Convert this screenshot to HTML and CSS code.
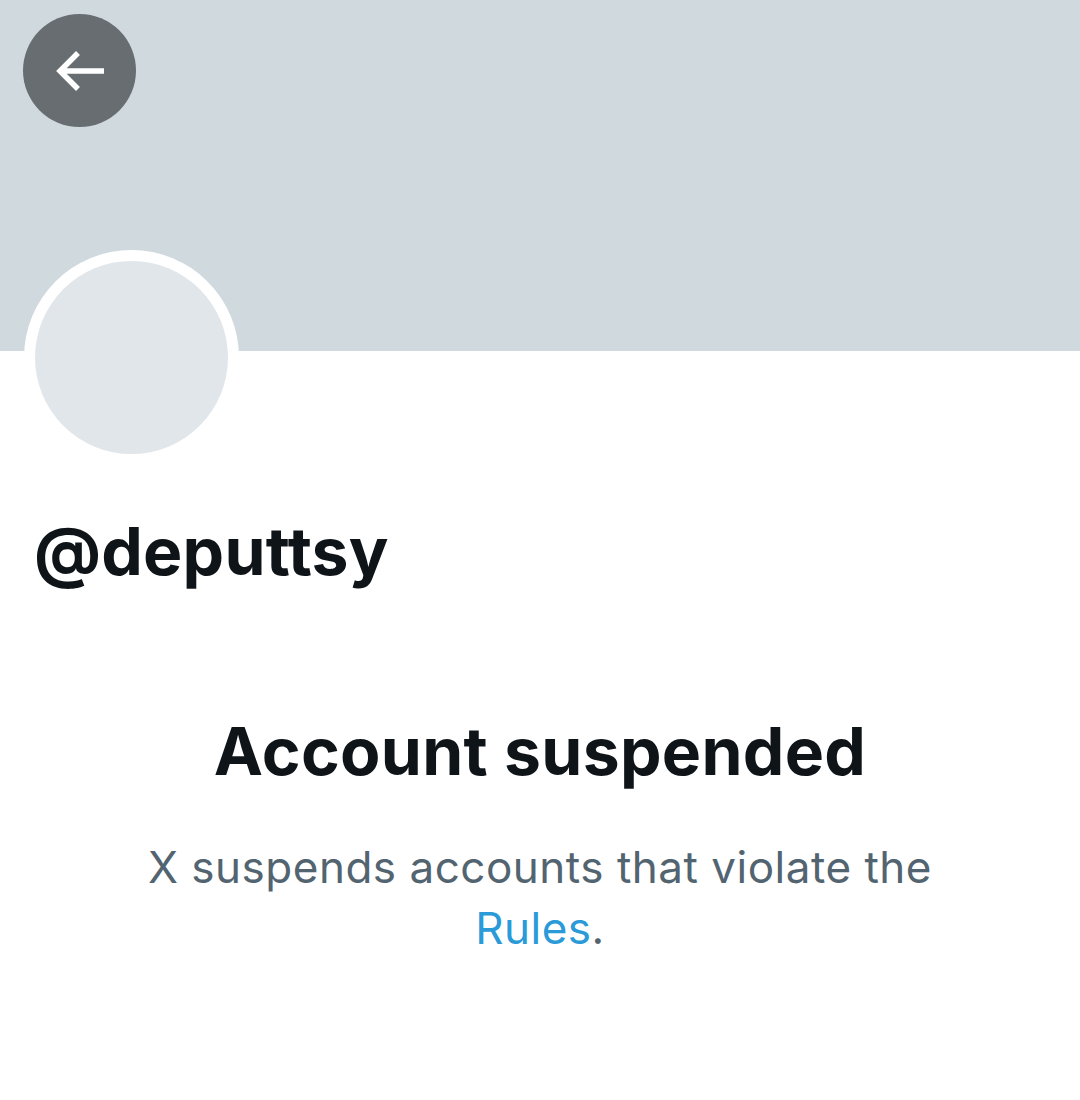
FILE: index.html
```html
<!DOCTYPE html>
<html>
<head>
<meta charset="utf-8">
<link rel="stylesheet" href="styles.css">
</head>
<body>
<div class="page">
  <div class="banner">
    <button class="back" aria-label="Back">
      <svg width="50" height="42" viewBox="0 0 50 42"><path d="M24 3 L6 21 L24 39 M6 21 H50" fill="none" stroke="#fff" stroke-width="5.5" stroke-linecap="butt"/></svg>
    </button>
  </div>
  <div class="profile">
    <div class="avatar-ring"><div class="avatar"></div></div>
    <div class="handle">@deputtsy</div>
  </div>
  <div class="notice">
    <h1 class="title">Account suspended</h1>
    <p class="desc">X suspends accounts that violate the <a class="link" href="#">Rules</a>.</p>
  </div>
</div>
</body>
</html>
```
FILE: styles.css
```css
* { box-sizing: border-box; }
html, body { margin: 0; padding: 0; background: #fff; }
body { font-family: Inter, Roboto, "Liberation Sans", sans-serif; color: #0f1419; }
.page { width: 1080px; height: 1100px; overflow: hidden; }
.banner { height: 351px; background: #cfd9de; padding: 14px 0 0 23px; }
.back {
  width: 113px; height: 113px; border-radius: 50%; border: none;
  background: #676d71; display: flex; align-items: center; justify-content: center;
  padding: 0; padding-right: 2px;
}
.profile { padding: 0 0 0 24px; margin-top: -101px; }
.avatar-ring {
  width: 215px; height: 215px; border-radius: 50%; background: #fff;
  padding: 11px;
}
.avatar { width: 100%; height: 100%; border-radius: 50%; background: #e1e6ea; }
.handle {
  margin: 46px 0 0 10px; font-size: 66px; font-weight: 700; line-height: 80px;
  letter-spacing: 0.2px;
}
.notice { text-align: center; margin-top: 120px; }
.title { margin: 0; font-size: 66px; font-weight: 700; line-height: 80px; letter-spacing: 0.3px; }
.desc { margin: 46px auto 0; width: 840px; font-size: 44px; line-height: 61px; color: #536471; letter-spacing: 0.5px; }
.link { color: #2a9ad8; text-decoration: none; }
```
